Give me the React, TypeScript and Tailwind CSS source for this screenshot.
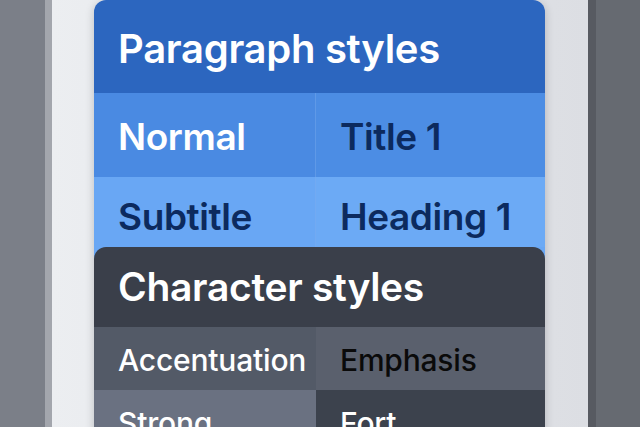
import React from 'react';

type Cell = { label: string; bg: string; text: string };

const paragraphRows: Cell[][] = [
  [
    { label: 'Normal', bg: 'bg-[#4a8ae2]', text: 'text-white' },
    { label: 'Title 1', bg: 'bg-[#4c8de4]', text: 'text-[#0c2a5e]' },
  ],
  [
    { label: 'Subtitle', bg: 'bg-[#69a7f4]', text: 'text-[#0c2a5e]' },
    { label: 'Heading 1', bg: 'bg-[#6caaf5]', text: 'text-[#0c2a5e]' },
  ],
];

const characterRows: Cell[][] = [
  [
    { label: 'Accentuation', bg: 'bg-[#535a67]', text: 'text-white' },
    { label: 'Emphasis', bg: 'bg-[#5a606d]', text: 'text-[#0a0a0a]' },
  ],
  [
    { label: 'Strong', bg: 'bg-[#6a7181]', text: 'text-white' },
    { label: 'Fort', bg: 'bg-[#3c424d]', text: 'text-white' },
  ],
];

export default function App() {
  return (
    <div
      className="flex h-[427px] w-[640px] overflow-hidden"
      style={{ fontFamily: 'Inter, "Noto Sans", sans-serif' }}
    >
      {/* left backdrop */}
      <div className="w-[45px] bg-[#7b7f88]" />
      <div className="w-[7px] bg-[#a3a6ad]" />

      {/* light panel */}
      <div className="flex-1 bg-gradient-to-r from-[#eceef1] to-[#dcdee3] pl-[42px] pr-[43px]">
        <div className="flex flex-col rounded-t-[12px] shadow-[0_2px_10px_rgba(0,0,0,0.2)]">
          {/* Paragraph styles */}
          <div className="flex h-[93px] items-center rounded-t-[12px] bg-[#2c66bf] pl-6 pt-1">
            <span className="text-[40px] font-semibold tracking-[-0.3px] text-white">Paragraph styles</span>
          </div>
          {paragraphRows.map((row, i) => (
            <div key={i} className={`flex ${i === 0 ? 'h-[84px]' : 'h-[70px]'}`}>
              {row.map((c, j) => (
                <div
                  key={j}
                  className={`flex items-center pl-6 ${i === 0 ? 'pt-1' : 'pt-[10px]'} ${c.bg} ${j === 0 ? 'w-[222px] border-r border-[#7fb0f0]/40' : 'flex-1'}`}
                >
                  <span className={`text-[37px] font-semibold tracking-[-0.4px] ${c.text}`}>{c.label}</span>
                </div>
              ))}
            </div>
          ))}

          {/* Character styles */}
          <div className="bg-[#69a7f4]">
            <div className="flex flex-col overflow-hidden rounded-t-[12px]">
              <div className="flex h-[80px] items-center bg-[#3a3f4a] pl-6">
                <span className="text-[39px] font-semibold tracking-[-0.3px] text-white">Character styles</span>
              </div>
              {characterRows.map((row, i) => (
                <div key={i} className="flex h-[63px]">
                  {row.map((c, j) => (
                    <div
                      key={j}
                      className={`flex items-center pl-6 pt-1 ${c.bg} ${j === 0 ? 'w-[222px]' : 'flex-1'}`}
                    >
                      <span className={`text-[30px] font-medium tracking-[-0.2px] ${c.text}`}>{c.label}</span>
                    </div>
                  ))}
                </div>
              ))}
            </div>
          </div>
        </div>
      </div>

      {/* right backdrop */}
      <div className="w-[8px] bg-[#575a61]" />
      <div className="w-[44px] bg-[#666a71]" />
    </div>
  );
}
